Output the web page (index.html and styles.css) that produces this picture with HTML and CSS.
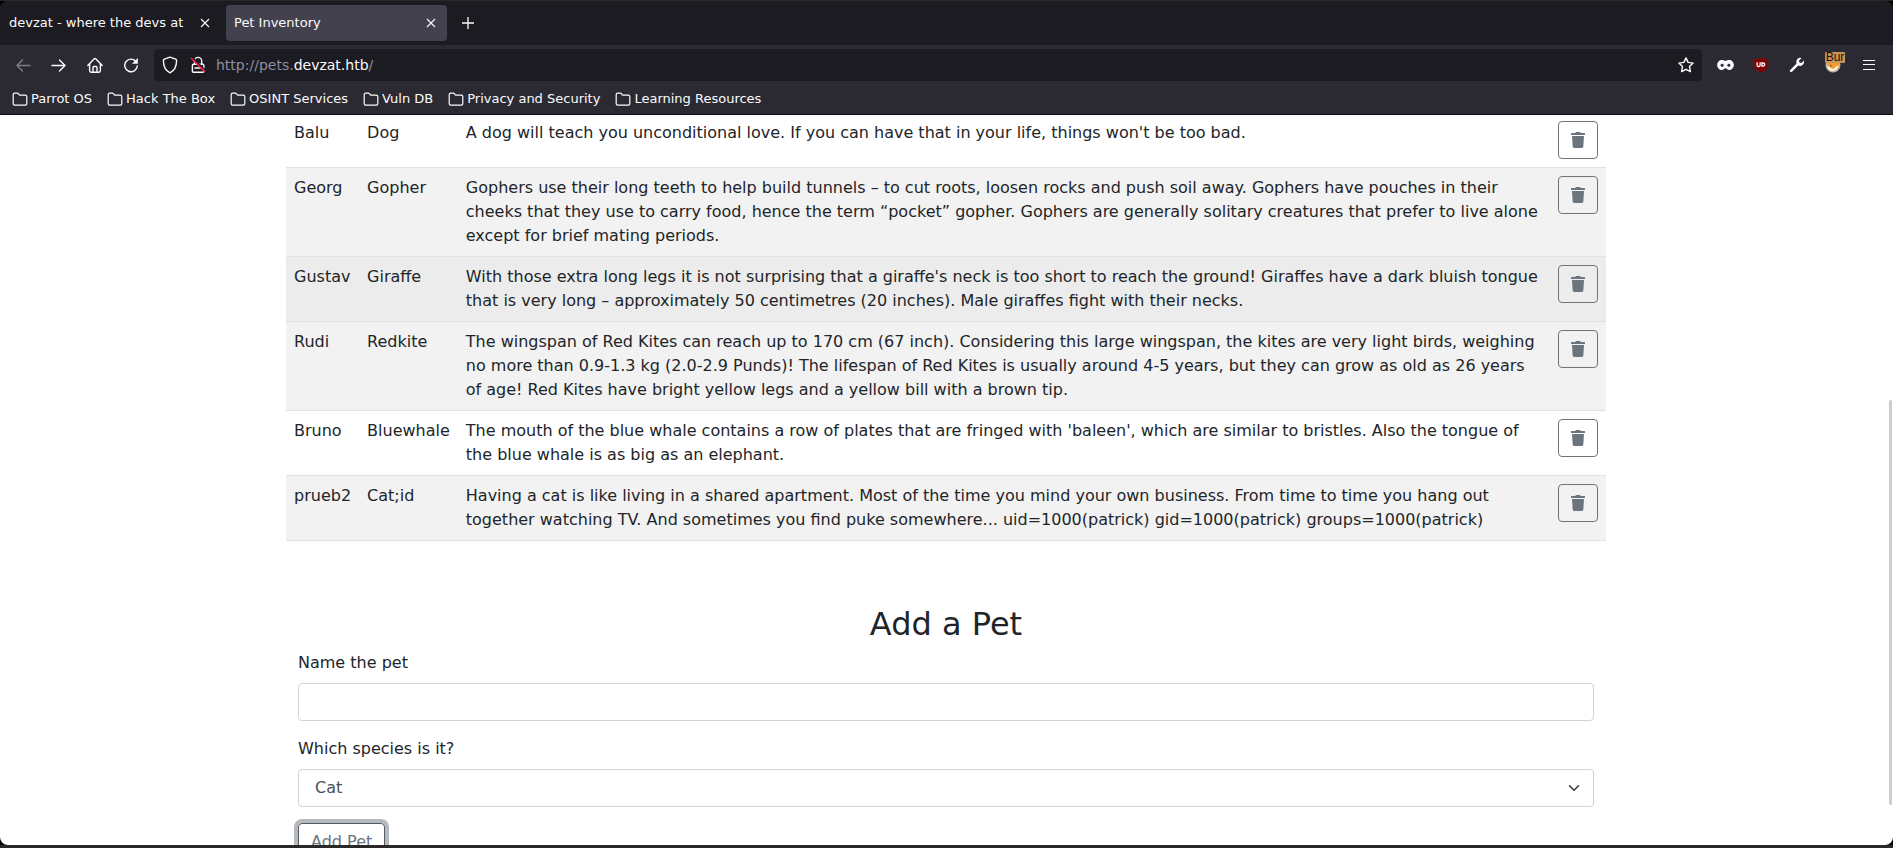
FILE: index.html
```html
<!DOCTYPE html>
<html lang="en">
<head>
<meta charset="utf-8">
<title>Pet Inventory</title>
<link rel="stylesheet" href="styles.css">
</head>
<body>
<svg class="sprite" aria-hidden="true">
  <symbol id="trash" viewBox="0 0 448 512"><path fill="currentColor" d="M432 32H312l-9.400-18.700A24 24 0 0 0 281.100 0H166.800a23.720 23.720 0 0 0-21.400 13.300L136 32H16A16 16 0 0 0 0 48v32a16 16 0 0 0 16 16h416a16 16 0 0 0 16-16V48a16 16 0 0 0-16-16zM53.200 467a48 48 0 0 0 47.900 45h245.800a48 48 0 0 0 47.900-45L416 128H32z"/></symbol>
  <symbol id="folder" viewBox="0 0 16 16"><path fill="none" stroke="currentColor" stroke-width="1.200" stroke-linejoin="round" d="M1.200 12.800V3.600q0-1.400 1.400-1.400h2.800q.6 0 1 .5l.9 1.100q.4.4 1 .4h5q1.500 0 1.500 1.500v7q0 1.400-1.400 1.400H2.600q-1.400 0-1.400-1.300z"/></symbol>
  <symbol id="close" viewBox="0 0 10 10"><path stroke="currentColor" stroke-width="1.100" d="M1 1l8 8M9 1L1 9"/></symbol>
</svg>
<div class="window">
  <header class="chrome">
    <div class="tabs" role="tablist">
      <div class="tab" role="tab"><span class="tab-title">devzat - where the devs at</span><button class="tab-close" aria-label="Close tab"><svg width="10" height="10"><use href="#close"/></svg></button></div>
      <div class="tab tab-active" role="tab" aria-selected="true"><span class="tab-title">Pet Inventory</span><button class="tab-close" aria-label="Close tab"><svg width="10" height="10"><use href="#close"/></svg></button></div>
      <button class="new-tab" aria-label="New tab"><svg width="12" height="12" viewBox="0 0 12 12"><path stroke="currentColor" stroke-width="1.300" d="M6 0v12M0 6h12"/></svg></button>
    </div>
    <nav class="toolbar">
      <button class="tool tool-off" aria-label="Back"><svg width="16" height="16" viewBox="0 0 16 16"><path class="line" d="M15 8.500H2M7.500 3L2 8.500 7.500 14"/></svg></button>
      <button class="tool" aria-label="Forward"><svg width="16" height="16" viewBox="0 0 16 16"><path class="line" d="M1 8.500h13M8.500 3L14 8.500 8.500 14"/></svg></button>
      <button class="tool" aria-label="Home"><svg width="16" height="16" viewBox="0 0 16 16"><path class="line" d="M.8 8.500L7 2q1-1 2 0l6.200 6.500M2.600 7v6.500q0 1.700 1.600 1.700h7.600q1.600 0 1.600-1.700V7M6 15v-4.500q0-1 1-1h2q1 0 1 1V15"/></svg></button>
      <button class="tool" aria-label="Reload"><svg width="16" height="16" viewBox="0 0 16 16"><path class="line" d="M13.200 4.800A6.300 6.300 0 1 0 14.300 9"/><path fill="currentColor" d="M14.800 1v5.400q0 .4-.4.4H9z"/></svg></button>
      <div class="urlbar">
        <svg width="16" height="18" viewBox="0 0 16 18"><path class="line" d="M8 1.200l5.600 1.900q1 .4 1 1.500c0 6-1.800 10-6.600 12.200C3.200 14.600 1.400 10.600 1.400 4.600q0-1.100 1-1.500z"/></svg>
        <svg class="lock" width="16" height="18" viewBox="0 0 16 18"><path class="line" d="M4.500 8V5a3.600 3.600 0 0 1 7.200 0v3M3.400 8.200h9.400q1 0 1 1v6q0 1-1 1H3.400q-1 0-1-1v-6q0-1 1-1zM5 12h6"/><path stroke="#1c1b22" stroke-width="1.500" d="M2.500 1.500l13 13"/><path stroke="#f0204a" stroke-width="1.700" d="M1 2l14 14"/></svg>
        <div class="url" role="textbox" aria-label="Address">http://pets.<b>devzat.htb</b>/</div>
        <button class="star" aria-label="Bookmark this page"><svg width="16" height="16" viewBox="0 0 16 16"><path class="line" d="M8 .9l2.100 4.500 5 .7-3.600 3.500.9 5L8 12.300l-4.400 2.300.9-5L.9 6.100l5-.7z"/></svg></button>
      </div>
      <button class="tool" aria-label="Mask extension"><svg width="17" height="12" viewBox="0 0 17 12"><path fill="currentColor" fill-rule="evenodd" d="M5 1c1.600 0 2.400.8 3.500.8S10.400 1 12 1c2.700 0 4.800 2.100 4.800 5s-2.100 5-4.800 5c-1.600 0-2.500-1.700-3.500-1.700S6.600 11 5 11C2.300 11 .2 8.900.2 6S2.300 1 5 1zM3.400 6.200c.5 1.100 1 1.500 1.900 1.500.7 0 1.100-.5 1.500-1.500-.4-1-.8-1.500-1.500-1.500-.9 0-1.400.5-1.900 1.500zm6.800 0c.4 1 .8 1.500 1.500 1.500.9 0 1.400-.4 1.900-1.500-.5-1-1-1.500-1.900-1.500-.7 0-1.100.5-1.500 1.500z"/></svg></button>
      <button class="tool" aria-label="Blocker extension"><svg width="16" height="16" viewBox="0 0 16 16"><path fill="#800000" stroke="#5a262c" stroke-width=".6" d="M8 .5c2 1.200 4 1.700 7 1.700V7c0 4.500-3 7-7 8.700C4 14 1 11.500 1 7V2.200C4 2.200 6 1.700 8 .5z"/><path fill="none" stroke="#fff" stroke-width="1.300" d="M4.100 5.300v3q0 1.400 1.500 1.400t1.500-1.400v-3M8.900 5.900v3.200h1q1.800 0 1.800-1.600t-1.800-1.600z"/></svg></button>
      <button class="tool" aria-label="Developer extension"><svg width="16" height="16" viewBox="0 0 16 16"><path fill="currentColor" d="M15 3.400a4.300 4.300 0 0 1-5.700 5.200L3 14.800a1.200 1.200 0 0 1-1.800-1.800l6.200-6.300A4.300 4.300 0 0 1 12.600 1L10 3.600l.4 2 2 .4z"/></svg></button>
      <button class="tool proxy" aria-label="Proxy: Bur"><svg width="16" height="16" viewBox="0 0 16 16"><circle cx="8" cy="8" r="7.500" fill="#b9b4ae"/><path fill="#f39a2d" d="M2 5h12v4q-2 4.500-6 5Q4 13.500 2 9z"/><path fill="#fff3dc" d="M1.800 8l4 3 2.200 1 5.500-4q0 5-5.500 6Q3 14 1.800 8z"/><path fill="#5b6f86" d="M5 8h2v1.200H5z"/><path fill="#f6a12f" d="M8 7l4 .5-3.500 4.500z"/></svg><span class="proxy-badge">Bur</span></button>
      <button class="tool" aria-label="Menu"><svg width="12" height="10" viewBox="0 0 12 10"><path stroke="currentColor" d="M0 .5h12M0 4.500h12M0 9.500h12"/></svg></button>
    </nav>
    <nav class="bookmarks">
      <a href="#"><svg width="16" height="16"><use href="#folder"/></svg>Parrot OS</a>
      <a href="#"><svg width="16" height="16"><use href="#folder"/></svg>Hack The Box</a>
      <a href="#"><svg width="16" height="16"><use href="#folder"/></svg>OSINT Services</a>
      <a href="#"><svg width="16" height="16"><use href="#folder"/></svg>Vuln DB</a>
      <a href="#"><svg width="16" height="16"><use href="#folder"/></svg>Privacy and Security</a>
      <a href="#"><svg width="16" height="16"><use href="#folder"/></svg>Learning Resources</a>
    </nav>
  </header>
  <main class="page">
    <div class="container">
      <table class="pets">
        <tbody>
          <tr><td>Balu</td><td>Dog</td><td class="about">A dog will teach you unconditional love. If you can have that in your life, things won't be too bad.</td><td><button class="btn btn-icon" aria-label="Delete Balu"><svg width="14" height="16"><use href="#trash"/></svg></button></td></tr>
          <tr class="striped"><td>Georg</td><td>Gopher</td><td class="about">Gophers use their long teeth to help build tunnels – to cut roots, loosen rocks and push soil away. Gophers have pouches in their cheeks that they use to carry food, hence the term “pocket” gopher. Gophers are generally solitary creatures that prefer to live alone except for brief mating periods.</td><td><button class="btn btn-icon" aria-label="Delete Georg"><svg width="14" height="16"><use href="#trash"/></svg></button></td></tr>
          <tr class="hovered"><td>Gustav</td><td>Giraffe</td><td class="about">With those extra long legs it is not surprising that a giraffe's neck is too short to reach the ground! Giraffes have a dark bluish tongue that is very long – approximately 50 centimetres (20 inches). Male giraffes fight with their necks.</td><td><button class="btn btn-icon" aria-label="Delete Gustav"><svg width="14" height="16"><use href="#trash"/></svg></button></td></tr>
          <tr class="striped"><td>Rudi</td><td>Redkite</td><td class="about">The wingspan of Red Kites can reach up to 170 cm (67 inch). Considering this large wingspan, the kites are very light birds, weighing no more than 0.9-1.3 kg (2.0-2.9 Punds)! The lifespan of Red Kites is usually around 4-5 years, but they can grow as old as 26 years of age! Red Kites have bright yellow legs and a yellow bill with a brown tip.</td><td><button class="btn btn-icon" aria-label="Delete Rudi"><svg width="14" height="16"><use href="#trash"/></svg></button></td></tr>
          <tr><td>Bruno</td><td>Bluewhale</td><td class="about">The mouth of the blue whale contains a row of plates that are fringed with 'baleen', which are similar to bristles. Also the tongue of the blue whale is as big as an elephant.</td><td><button class="btn btn-icon" aria-label="Delete Bruno"><svg width="14" height="16"><use href="#trash"/></svg></button></td></tr>
          <tr class="striped"><td>prueb2</td><td>Cat;id</td><td class="about">Having a cat is like living in a shared apartment. Most of the time you mind your own business. From time to time you hang out together watching TV. And sometimes you find puke somewhere... uid=1000(patrick) gid=1000(patrick) groups=1000(patrick)</td><td><button class="btn btn-icon" aria-label="Delete prueb2"><svg width="14" height="16"><use href="#trash"/></svg></button></td></tr>
        </tbody>
      </table>
      <form class="add-pet">
        <h2>Add a Pet</h2>
        <label for="name">Name the pet</label>
        <input class="control" id="name" type="text">
        <label for="species">Which species is it?</label>
        <div class="select-wrap">
          <select class="control" id="species"><option>Cat</option><option>Dog</option><option>Gopher</option><option>Giraffe</option><option>Redkite</option><option>Bluewhale</option></select>
          <svg class="chevron" width="12" height="12" viewBox="0 0 16 16"><path fill="none" stroke="#343a40" stroke-width="2" stroke-linecap="round" stroke-linejoin="round" d="M2 5l6 6 6-6"/></svg>
        </div>
        <button class="btn btn-focus" type="button">Add Pet</button>
      </form>
    </div>
    <div class="scroll-thumb"></div>
  </main>
</div>
</body>
</html>
```
FILE: styles.css
```css
* { box-sizing: border-box; }

body {
  margin: 0;
  height: 100vh;
  padding: 1px 0 3px;
  overflow: hidden;
  background: #2a2829;
  color: #212529;
  font: 16px/24px "DejaVu Sans", sans-serif;
}

button, input, select { font: inherit; color: inherit; }
svg { display: block; flex: none; }
.sprite { position: absolute; width: 0; height: 0; }
.line { fill: none; stroke: currentColor; stroke-width: 1.4; stroke-linecap: round; stroke-linejoin: round; }

.window {
  display: flex;
  flex-direction: column;
  height: 100%;
  background: #000;
}

/* Browser chrome */
.chrome {
  flex: none;
  background: #2b2a33;
  color: #fbfbfe;
  font-size: 13px;
  line-height: 20px;
  border-bottom: 1px solid #0c0c0d;
  border-radius: 8px 8px 0 0;
}
.chrome button { border: 0; padding: 0; background: none; display: flex; align-items: center; justify-content: center; }

.tabs {
  display: flex;
  align-items: center;
  height: 44px;
  background: #1c1b22;
  border-radius: 8px 8px 0 0;
}
.tab {
  display: flex;
  align-items: center;
  width: 221px;
  height: 36px;
  padding: 0 6px 0 9px;
  border-radius: 4px;
}
.tab-active { margin-left: 5px; padding-left: 8px; background: #42414d; }
.tab-title { flex: 1; white-space: nowrap; overflow: hidden; }
.tab-close { width: 20px; height: 20px; }
.chrome .new-tab { width: 36px; height: 36px; margin-left: 3px; }

.toolbar {
  display: flex;
  align-items: center;
  height: 40px;
  padding: 0 6px 0 5px;
}
.tool { width: 36px; height: 32px; }
.tool-off { opacity: .4; }
.urlbar {
  display: flex;
  flex: 1;
  align-items: center;
  height: 32px;
  margin: 0 5px;
  padding: 0 8px;
  background: #1c1b22;
  border-radius: 4px;
}
.lock { margin: 0 10px 0 12px; }
.url { flex: 1; font-size: 14px; color: #8f8f9d; }
.url b { font-weight: normal; color: #fbfbfe; }
.proxy { position: relative; }
.proxy-badge {
  position: absolute;
  top: 3px;
  left: 10px;
  width: 20px;
  height: 11px;
  background: #c99559;
  color: #1a1208;
  border-radius: 1px;
  text-align: center;
  font: 12px/11px "Liberation Sans", sans-serif;
}

.bookmarks {
  display: flex;
  align-items: center;
  gap: 15px;
  height: 29px;
  padding: 0 12px 1px;
}
.bookmarks a { display: flex; align-items: center; gap: 3px; color: inherit; text-decoration: none; white-space: nowrap; }

/* Page */
.page {
  position: relative;
  flex: 1;
  min-height: 0;
  padding-right: 1px;
  overflow: hidden;
  background: #fff;
  border-radius: 0 0 8px 8px;
}
.container { max-width: 1320px; margin: -2px auto 0; }

.pets { width: 100%; border-collapse: separate; border-spacing: 0; }
.pets td { padding: 8px; border-bottom: 1px solid #dee2e6; vertical-align: top; }
.pets .about { width: 100%; }
.striped { background: #f2f2f2; }
.hovered { background: #ececec; }

.btn {
  display: block;
  height: 38px;
  padding: 6px 12px;
  border: 1px solid #6c757d;
  border-radius: 4px;
  background: transparent;
  color: #6c757d;
}
.btn-icon { display: flex; align-items: center; }
.btn-focus { border-color: #565a5e; box-shadow: 0 0 0 4px #b5babe; }

.add-pet { padding: 64px 12px 0; }
.add-pet h2 { margin: 0 0 8px; font-size: 32px; line-height: 38px; font-weight: 500; text-align: center; }
.add-pet label { display: block; margin-bottom: 8px; }
.control {
  display: block;
  width: 100%;
  height: 38px;
  margin-bottom: 16px;
  padding: 6px 12px;
  border: 1px solid #ced4da;
  border-radius: 4px;
  background: #fff;
  color: #495057;
}
select.control { appearance: none; padding-left: 16px; }
.select-wrap { position: relative; }
.chevron { position: absolute; right: 14px; top: 13px; pointer-events: none; }

.scroll-thumb {
  position: absolute;
  top: 39%;
  right: 1px;
  width: 3px;
  height: 405px;
  border-radius: 2px;
  background: #cdcdcd;
}
```
